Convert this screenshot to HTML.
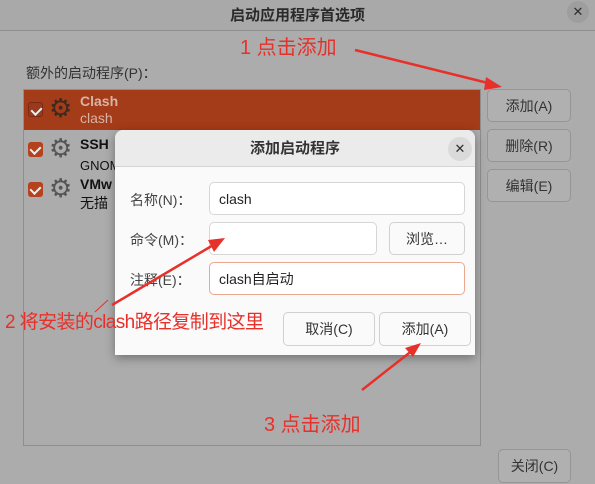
<!DOCTYPE html>
<html><head><meta charset="utf-8"><style>
*{box-sizing:border-box;margin:0;padding:0}
body{width:595px;height:484px;overflow:hidden;background:#acacac;font-family:"Liberation Sans","Noto Sans CJK SC",sans-serif;position:relative;color:#2e2e2e}
.abs{position:absolute}
.btn{position:absolute;border:1px solid #959595;border-radius:5px;background:#b0b0b0;font-size:14px;color:#333;display:flex;align-items:center;justify-content:center}
.dbtn{position:absolute;border:1px solid #d0d0d0;border-radius:5px;background:#fafafa;font-size:14px;color:#333;display:flex;align-items:center;justify-content:center}
.inp{position:absolute;border:1px solid #d6d6d6;border-radius:5px;background:#fff;font-size:14px;padding-left:9px;display:flex;align-items:center;color:#222}
.lbl{position:absolute;font-size:14px;color:#444}
.red{position:absolute;color:#e8302a;font-size:20px}
.cb{position:absolute;width:15px;height:15px;border-radius:3px;background:#b5421e}
.cb:after{content:"";position:absolute;left:4px;top:2px;width:5px;height:8px;border:solid #eee;border-width:0 2px 2px 0;transform:rotate(45deg)}
</style></head><body>
<div class="abs" style="left:0;top:0;width:595px;height:31px;background:#a9a9a9;border-bottom:1px solid #8e8e8e"></div>
<div class="abs" style="left:0;top:4px;width:595px;text-align:center;font-size:15px;font-weight:bold;color:#2a2a2a">启动应用程序首选项</div>
<div class="abs" style="left:567px;top:1px;width:22px;height:22px;border-radius:50%;background:#9e9e9e;font-size:13px;text-align:center;line-height:22px">✕</div>
<div class="abs" style="left:26px;top:63px;font-size:14px;color:#333">额外的启动程序(P)：</div>
<div class="abs" style="left:23px;top:89px;width:458px;height:357px;border:1px solid #8e8e8e"></div>
<div class="abs" style="left:24px;top:90px;width:456px;height:40px;background:#a43b19"></div>
<div class="cb" style="left:28px;top:102px;background:#9a3a1c;border:1px solid #7a2a12"></div>
<div class="cb" style="left:28px;top:142px"></div>
<div class="cb" style="left:28px;top:182px"></div>
<div class="abs" style="left:49px;top:93px;font-size:26px;color:#3a2a20">⚙</div>
<div class="abs" style="left:49px;top:133px;font-size:26px;color:#555">⚙</div>
<div class="abs" style="left:49px;top:173px;font-size:26px;color:#555">⚙</div>
<div class="abs" style="left:80px;top:93px;font-size:14px;font-weight:bold;color:#d9b3a5">Clash</div>
<div class="abs" style="left:80px;top:110px;font-size:14px;color:#d9b3a5">clash</div>
<div class="abs" style="left:80px;top:136px;font-size:14px;font-weight:bold;color:#111">SSH</div>
<div class="abs" style="left:80px;top:158px;font-size:13px;color:#111">GNOME</div>
<div class="abs" style="left:80px;top:176px;font-size:14px;font-weight:bold;color:#111">VMw</div>
<div class="abs" style="left:80px;top:193px;font-size:14px;color:#111">无描</div>
<div class="btn" style="left:487px;top:89px;width:84px;height:33px">添加(A)</div>
<div class="btn" style="left:487px;top:129px;width:84px;height:33px">删除(R)</div>
<div class="btn" style="left:487px;top:169px;width:84px;height:33px">编辑(E)</div>
<div class="btn" style="left:498px;top:449px;width:73px;height:34px">关闭(C)</div>
<div class="abs" style="left:115px;top:130px;width:360px;height:225px;background:#fafafa;border-radius:8px 8px 0 0;box-shadow:0 3px 10px rgba(0,0,0,.35);overflow:hidden">
<div style="height:37px;background:#ebebeb;border-bottom:1px solid #d4d4d4;text-align:center;font-size:15px;font-weight:bold;line-height:37px;color:#333">添加启动程序</div>
</div>
<div class="abs" style="left:448px;top:137px;width:24px;height:24px;border-radius:50%;background:#dadada;font-size:13px;text-align:center;line-height:24px">✕</div>
<div class="lbl" style="left:130px;top:190px">名称(N)：</div>
<div class="lbl" style="left:130px;top:230px">命令(M)：</div>
<div class="lbl" style="left:130px;top:270px">注释(E)：</div>
<div class="inp" style="left:209px;top:182px;width:256px;height:33px">clash</div>
<div class="inp" style="left:209px;top:222px;width:168px;height:33px"></div>
<div class="dbtn" style="left:389px;top:222px;width:76px;height:33px">浏览…</div>
<div class="inp" style="left:209px;top:262px;width:256px;height:33px;border-color:#e9a890">clash自启动</div>
<div class="dbtn" style="left:283px;top:312px;width:92px;height:34px">取消(C)</div>
<div class="dbtn" style="left:379px;top:312px;width:92px;height:34px">添加(A)</div>
<div class="red" style="left:240px;top:31px">1 点击添加</div>
<div class="red" style="left:5px;top:307px;font-size:19px;letter-spacing:-0.6px">2 将安装的clash路径复制到这里</div>
<div class="red" style="left:264px;top:408px">3 点击添加</div>
<svg class="abs" style="left:0;top:0" width="595" height="484">
<g fill="#e8302a" stroke="#e8302a" stroke-width="2.5">
<line x1="355" y1="50" x2="492" y2="84"/><polygon points="502,87 486,77 484,90" stroke="none"/>
<line x1="112" y1="305" x2="215" y2="244"/><polygon points="225,238 208,240 214,252" stroke="none"/>
<line x1="362" y1="390" x2="413" y2="350"/><polygon points="421,343 405,348 413,357" stroke="none"/>
<line x1="95" y1="312" x2="108" y2="300" stroke-width="1"/>
</g></svg>
</body></html>
